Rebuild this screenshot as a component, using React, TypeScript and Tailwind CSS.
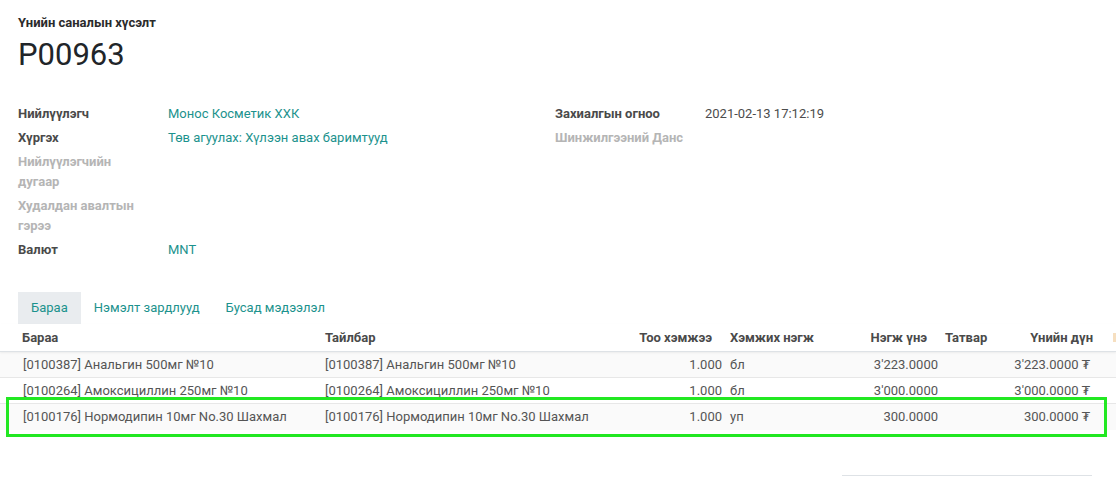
import React from "react";

const teal = "text-[#1c928d]";

function Field({ label, value, faded, valueClass }: { label: string; value?: string; faded?: boolean; valueClass?: string }) {
  return (
    <div className="flex mb-[4px] leading-[20px]">
      <div className={`w-[150px] shrink-0 pr-[20px] font-bold ${faded ? "text-[#b5b5b5]" : "text-[#4a4a4a]"}`}>{label}</div>
      <div className={valueClass ?? teal}>{value}</div>
    </div>
  );
}

const rows = [
  { p: "[0100387] Анальгин 500мг №10", d: "[0100387] Анальгин 500мг №10", q: "1.000", u: "бл", pr: "3'223.0000", t: "3'223.0000 ₮" },
  { p: "[0100264] Амоксициллин 250мг №10", d: "[0100264] Амоксициллин 250мг №10", q: "1.000", u: "бл", pr: "3'000.0000", t: "3'000.0000 ₮" },
  { p: "[0100176] Нормодипин 10мг No.30 Шахмал", d: "[0100176] Нормодипин 10мг No.30 Шахмал", q: "1.000", u: "уп", pr: "300.0000", t: "300.0000 ₮" },
];

export default function App() {
  return (
    <div className="relative w-[1116px] h-[477px] overflow-hidden bg-white text-[13px] text-[#4c4c4c]" style={{ fontFamily: "Roboto, 'DejaVu Sans', sans-serif" }}>
      <div className="px-[18px] pt-[14px]">
        <div className="font-bold text-[13px] leading-[18px] text-[#2b2b2b]">Үнийн саналын хүсэлт</div>
        <div className="text-[31px] leading-[40px] mt-[3px] text-[#212529]">P00963</div>
      </div>

      <div className="flex px-[18px] mt-[29px]">
        <div className="w-[537px]">
          <Field label="Нийлүүлэгч" value="Монос Косметик ХХК" />
          <Field label="Хүргэх" value="Төв агуулах: Хүлээн авах баримтууд" />
          <Field label="Нийлүүлэгчийн дугаар" faded />
          <Field label="Худалдан авалтын гэрээ" faded />
          <Field label="Валют" value="MNT" />
        </div>
        <div className="flex-1">
          <Field label="Захиалгын огноо" value="2021-02-13 17:12:19" valueClass="text-[#4c4c4c]" />
          <Field label="Шинжилгээний Данс" faded />
        </div>
      </div>

      <div className="flex px-[18px] mt-[28px] h-[32px] items-center">
        <div className={`h-full flex items-center px-[13px] bg-[#e9ecef] ${teal}`}>Бараа</div>
        <div className={`h-full flex items-center px-[13px] ${teal}`}>Нэмэлт зардлууд</div>
        <div className={`h-full flex items-center px-[13px] ${teal}`}>Бусад мэдээлэл</div>
      </div>

      <div className="w-[1116px]">
        <div className="flex h-[28px] items-center font-bold text-[#4a4a4a] border-b border-[#dee2e6] shadow-[0_1px_2px_rgba(0,0,0,0.06)] relative">
          <div className="w-[317px] pl-[22px]">Бараа</div>
          <div className="w-[303px] pl-[8px]">Тайлбар</div>
          <div className="w-[106px] pr-[14px] text-right">Тоо хэмжээ</div>
          <div className="w-[114px] pl-[4px]">Хэмжих нэгж</div>
          <div className="w-[102px] pr-[15px] text-right">Нэгж үнэ</div>
          <div className="w-[58px] pl-[3px]">Татвар</div>
          <div className="w-[94px] pr-[1px] text-right">Үнийн дүн</div>
          <div className="flex-1 flex justify-end">
            <div className="w-[3px] h-[9px] bg-[#f6dfc0] mr-0" />
          </div>
        </div>
        {rows.map((r, i) => (
          <div key={i} className={`flex h-[26px] items-center border-b border-[#e7e7e7] text-[#555] ${i % 2 === 0 ? "bg-[#fafafa]" : "bg-white"} ${i === 2 ? "border-b-0" : ""}`}>
            <div className="w-[317px] pl-[23px] whitespace-nowrap">{r.p}</div>
            <div className="w-[303px] pl-[8px] whitespace-nowrap">{r.d}</div>
            <div className="w-[106px] pr-[4px] text-right">{r.q}</div>
            <div className="w-[114px] pl-[4px]">{r.u}</div>
            <div className="w-[102px] pr-[4px] text-right">{r.pr}</div>
            <div className="w-[58px]" />
            <div className="w-[94px] pr-[4px] text-right whitespace-nowrap">{r.t}</div>
            <div className="flex-1" />
          </div>
        ))}
      </div>

      <div className="flex justify-end pr-[24px] mt-[45px]">
        <div className="w-[250px] h-[1px] bg-[#dee2e6]" />
      </div>

      <div className="absolute left-[6px] top-[397px] w-[1101px] h-[40px] border-[3px] border-[#22e822] pointer-events-none" />
    </div>
  );
}
